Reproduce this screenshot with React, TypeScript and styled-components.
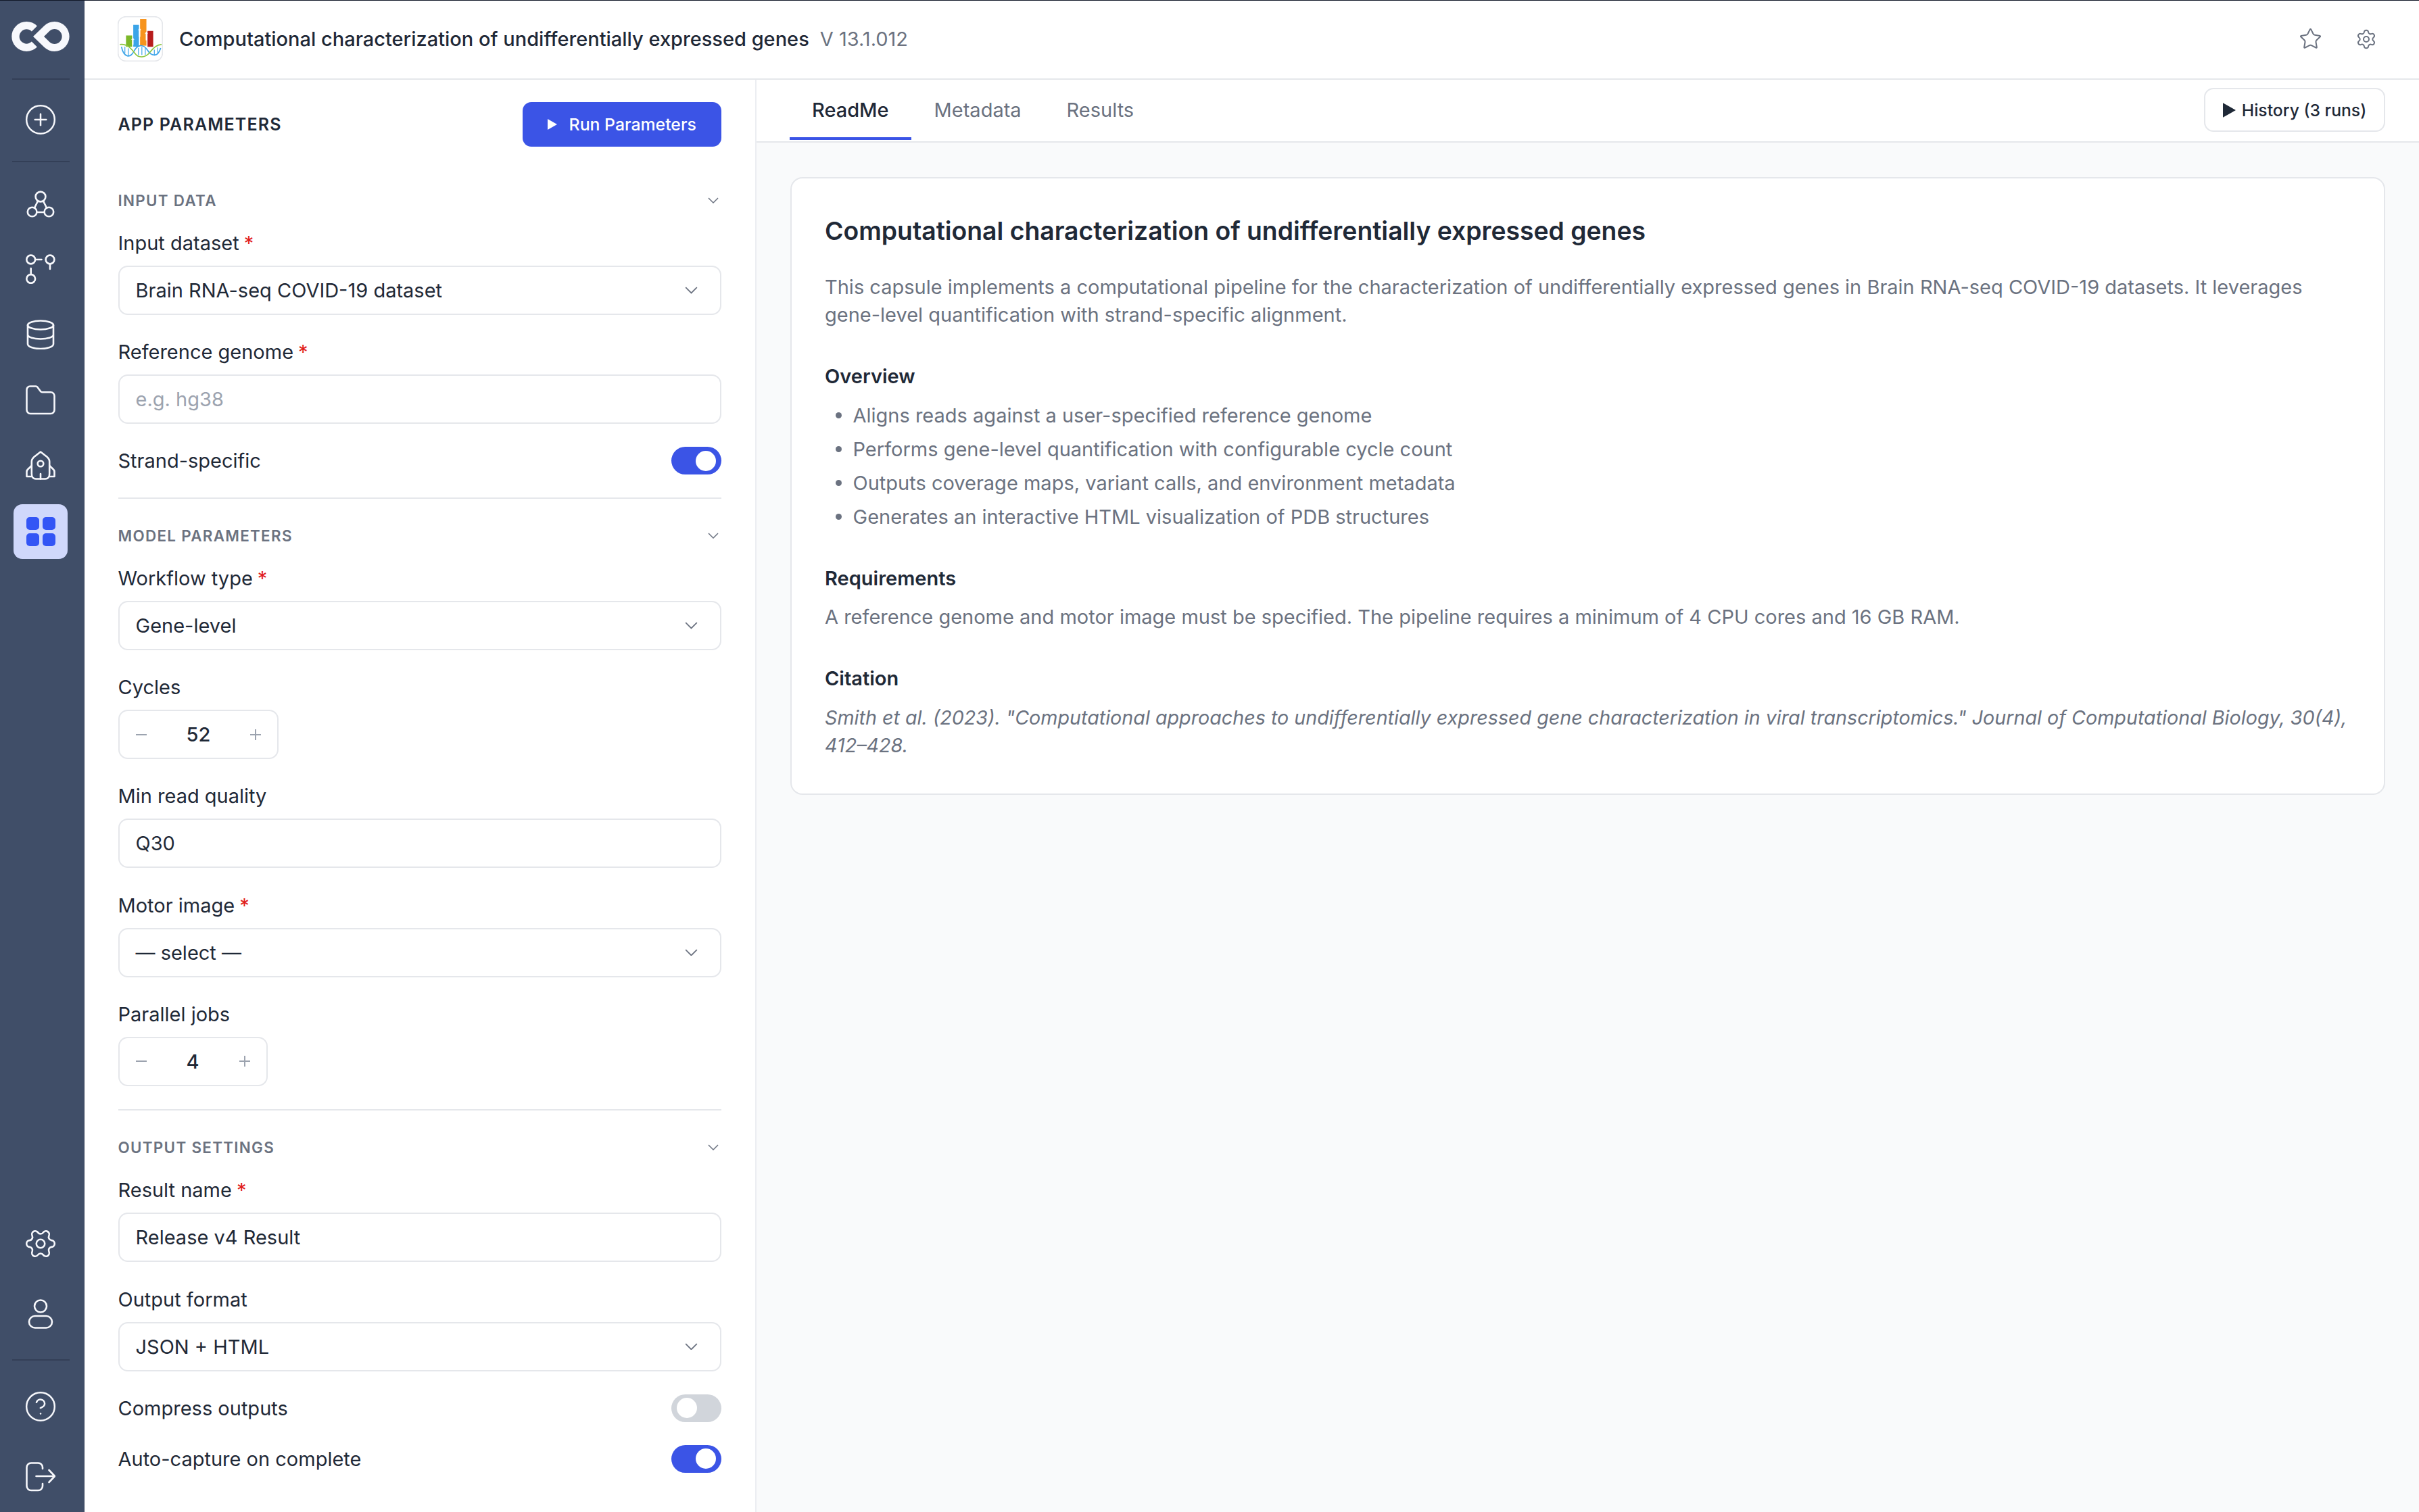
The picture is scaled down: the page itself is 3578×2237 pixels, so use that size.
import React from "react";
import styled, { createGlobalStyle } from "styled-components";
import { CirclePlus, CircleHelp, Settings, Star } from "lucide-react";

const GlobalStyle = createGlobalStyle`
  html, body { margin: 0; padding: 0; background: #fff; }
  body { font-family: Inter, "Liberation Sans", sans-serif; color: #1f2937; overflow: hidden; }
  * { box-sizing: border-box; }
`;

const Page = styled.div`
  display: flex;
  width: 3578px;
  height: 2237px;
  border-top: 1px solid #111827;
  overflow: hidden;
`;

const Sidebar = styled.nav`
  flex: 0 0 125px;
  display: flex;
  flex-direction: column;
  align-items: center;
  background: #404e68;
  border-right: 1px solid #36435b;
  padding: 23px 4px 12px 0;
`;

const LogoMark = styled.svg`
  width: 100px;
  height: 60px;
  flex: none;
`;

const NavRule = styled.div<{ $top: number; $bottom: number }>`
  width: 85px;
  height: 2px;
  flex: none;
  background: #333f57;
  margin: ${(p) => p.$top}px 0 ${(p) => p.$bottom}px;
`;

const NavItem = styled.div<{ $active?: boolean }>`
  width: 80px;
  height: 81px;
  flex: none;
  display: flex;
  align-items: center;
  justify-content: center;
  border-radius: 13px;
  color: #f7f8fc;
  background: ${(p) => (p.$active ? "#d0d8fb" : "transparent")};
`;

const NavGroup = styled.div`
  display: flex;
  flex-direction: column;
  gap: 16px;
`;

const NavFooter = styled.div`
  margin-top: auto;
  display: flex;
  flex-direction: column;
  align-items: center;
  gap: 23px;
`;

const NavFooterGroup = styled.div`
  display: flex;
  flex-direction: column;
  gap: 23px;
`;

const NavSvg = styled.svg.attrs({ viewBox: "0 0 44 44", fill: "none", stroke: "currentColor" })`
  width: 44px;
  height: 44px;
  stroke-width: 2.6;
  stroke-linecap: round;
  stroke-linejoin: round;
`;

const GridMark = styled.div`
  display: grid;
  grid-template-columns: 19px 19px;
  grid-auto-rows: 19px;
  gap: 5px;
`;

const GridCell = styled.span`
  background: #3355f5;
  border-radius: 5px;
`;

const Rotated = styled.span`
  display: flex;
  transform: rotate(90deg);
`;

const Main = styled.div`
  flex: 1;
  min-width: 0;
  display: flex;
  flex-direction: column;
`;

const TopBar = styled.header`
  flex: 0 0 117px;
  display: flex;
  align-items: center;
  padding: 0 62px 2px 49px;
  border-bottom: 2px solid #e5e7eb;
  background: #fff;
`;

const AppLogo = styled.svg`
  width: 67px;
  height: 67px;
  flex: none;
  margin-right: 24px;
`;

const AppTitle = styled.h1`
  margin: 0;
  font-size: 29px;
  line-height: 36px;
  font-weight: 500;
  color: #1f2937;
`;

const Version = styled.span`
  margin-left: 16px;
  font-size: 29px;
  line-height: 36px;
  color: #6b7280;
`;

const TopActions = styled.div`
  margin-left: auto;
  display: flex;
  align-items: center;
  gap: 49px;
  color: #6b7280;
`;

const Body = styled.div`
  flex: 1;
  min-height: 0;
  display: flex;
`;

const Panel = styled.aside`
  flex: 0 0 993.5px;
  padding: 33px 49.5px 0 49.5px;
  background: #fff;
  border-right: 2px solid #eceef2;
`;

const PanelHead = styled.div`
  display: flex;
  align-items: center;
  justify-content: space-between;
  height: 66px;
`;

const PanelTitle = styled.h2`
  margin: 0;
  font-size: 25px;
  font-weight: 600;
  letter-spacing: 1.15px;
  color: #1f2937;
`;

const RunButton = styled.button`
  width: 294.5px;
  height: 66px;
  display: flex;
  align-items: center;
  justify-content: center;
  gap: 18px;
  border: 0;
  border-radius: 13px;
  background: #3b54e6;
  color: #fff;
  font: 500 24.8px Inter, sans-serif;
`;

const Triangle = styled.svg.attrs({ viewBox: "0 0 14 16" })<{ $w: number; $h: number }>`
  width: ${(p) => p.$w}px;
  height: ${(p) => p.$h}px;
  flex: none;
  fill: currentColor;
`;

const SectionHead = styled.div<{ $top: number }>`
  display: flex;
  align-items: center;
  justify-content: space-between;
  height: 28px;
  margin-top: ${(p) => p.$top}px;
  padding-right: 4px;
  color: #6b7280;
`;

const SectionTitle = styled.h3`
  margin: 0;
  font-size: 22.4px;
  font-weight: 600;
  letter-spacing: 1.3px;
  color: #6b7280;
`;

const Fields = styled.div`
  margin-top: 33.5px;
`;

const Field = styled.div`
  margin-top: 39.25px;
  &:first-child { margin-top: 0; }
`;

const Label = styled.label`
  display: block;
  height: 32px;
  margin-bottom: 17px;
  font-size: 29px;
  line-height: 32px;
  color: #1f2937;
`;

const Required = styled.span`
  margin-left: 7px;
  color: #e11d1d;
`;

const TextInput = styled.input`
  display: block;
  width: 100%;
  height: 73px;
  padding: 0 24px;
  border: 2px solid #e5e7eb;
  border-radius: 14px;
  background: #fff;
  font: 400 29px Inter, sans-serif;
  color: #1f2937;
  outline: none;
  &::placeholder { color: #9ca3af; opacity: 1; }
`;

const SelectBox = styled.div`
  display: flex;
  align-items: center;
  justify-content: space-between;
  height: 73px;
  padding: 0 33px 0 24px;
  border: 2px solid #e5e7eb;
  border-radius: 14px;
  background: #fff;
  font-size: 29px;
  color: #1f2937;
`;

const Chevron = styled.svg.attrs({ viewBox: "0 0 16 9", fill: "none", stroke: "currentColor" })<{ $w: number }>`
  width: ${(p) => p.$w}px;
  height: ${(p) => (p.$w * 9) / 16}px;
  flex: none;
  stroke-width: 1.5;
  color: #6b7280;
`;

const Stepper = styled.div`
  display: inline-flex;
  align-items: center;
  height: 73px;
  border: 2px solid #e5e7eb;
  border-radius: 14px;
  background: #fff;
`;

const StepButton = styled.span`
  width: 64px;
  display: flex;
  align-items: center;
  justify-content: center;
  color: #9ca3af;
`;

const StepGlyph = styled.svg.attrs({ viewBox: "0 0 18 18", fill: "none", stroke: "currentColor" })`
  width: 18px;
  height: 18px;
  stroke-width: 2;
`;

const StepValue = styled.span`
  padding: 0 35px;
  font-size: 29px;
  font-weight: 500;
  color: #1f2937;
`;

const ToggleRow = styled.div`
  display: flex;
  align-items: center;
  justify-content: space-between;
  height: 41px;
  margin-top: 34px;
  font-size: 29px;
  color: #1f2937;
`;

const Toggle = styled.span<{ $on?: boolean }>`
  width: 74px;
  height: 41px;
  display: flex;
  align-items: center;
  justify-content: ${(p) => (p.$on ? "flex-end" : "flex-start")};
  padding: 0 8px;
  border-radius: 21px;
  background: ${(p) => (p.$on ? "#3b54e6" : "#d1d5db")};
`;

const Knob = styled.span`
  width: 30px;
  height: 30px;
  border-radius: 50%;
  background: #fff;
`;

const Rule = styled.hr`
  height: 2px;
  margin: 34px 0 0;
  border: 0;
  background: #e5e7eb;
`;

const Content = styled.section`
  flex: 1;
  min-width: 0;
  display: flex;
  flex-direction: column;
  background: #f9fafb;
`;

const TabBar = styled.div`
  flex: 0 0 93px;
  display: flex;
  align-items: center;
  justify-content: space-between;
  padding: 0 50px 2px 49px;
  border-bottom: 2px solid #e5e7eb;
  background: #fff;
`;

const Tabs = styled.div`
  display: flex;
  align-self: stretch;
`;

const Tab = styled.div<{ $active?: boolean }>`
  display: flex;
  align-items: center;
  padding: 4px 33.5px 0;
  font-size: 29px;
  font-weight: ${(p) => (p.$active ? 500 : 400)};
  color: ${(p) => (p.$active ? "#1f2937" : "#6b7280")};
  border-bottom: 4px solid ${(p) => (p.$active ? "#3b54e6" : "transparent")};
`;

const HistoryButton = styled.button`
  width: 268px;
  height: 65px;
  display: flex;
  align-items: center;
  justify-content: center;
  gap: 9px;
  border: 2px solid #e5e7eb;
  border-radius: 14px;
  background: #fff;
  color: #1f2937;
  font: 500 24.7px Inter, sans-serif;
`;

const Card = styled.article`
  margin: 51px 50px 0 50px;
  padding: 56px 49.5px 50.5px;
  border: 2px solid #e5e7eb;
  border-radius: 18px;
  background: #fff;
`;

const CardTitle = styled.h2`
  margin: 0;
  font-size: 37.3px;
  line-height: 44px;
  font-weight: 600;
  color: #1f2937;
`;

const Para = styled.p<{ $top: number; $italic?: boolean }>`
  margin: ${(p) => p.$top}px 0 0;
  font-size: ${(p) => (p.$italic ? 28.7 : 29)}px;
  line-height: 41px;
  color: #6b7280;
  font-style: ${(p) => (p.$italic ? "italic" : "normal")};
`;

const SubTitle = styled.h3<{ $top: number }>`
  margin: ${(p) => p.$top}px 0 0;
  font-size: 29px;
  line-height: 36px;
  font-weight: 600;
  color: #1f2937;
`;

const Bullets = styled.ul`
  margin: 15px 0 0;
  padding: 0 0 0 15.5px;
  list-style: none;
`;

const Bullet = styled.li`
  display: flex;
  align-items: center;
  gap: 17px;
  height: 49.8px;
  font-size: 29px;
  color: #6b7280;
  &::before {
    content: "";
    width: 9px;
    height: 9px;
    flex: none;
    border-radius: 50%;
    background: #6b7280;
  }
`;

const CoLogo = () => (
  <LogoMark viewBox="0 0 300 180">
    <path d="M122.6 55.4A49 49 0 1 0 122.6 124.6" fill="none" stroke="#f7f8fc" strokeWidth="34" />
    <path
      fill="#f7f8fc"
      fillRule="evenodd"
      d="M117 90L166 42.5A66 66 0 1 1 166 137.5ZM165 90L188.8 66.5A33 33 0 1 1 188.8 113.5Z"
    />
  </LogoMark>
);

const GenesLogo = () => (
  <AppLogo viewBox="28 30 200 200">
    <rect x="30" y="32" width="196" height="196" rx="34" fill="#fff" stroke="#e5e7eb" strokeWidth="5" />
    <rect x="65" y="115" width="27" height="50" fill="#7cb829" />
    <rect x="97" y="68" width="25" height="97" fill="#3ba4e8" />
    <rect x="127" y="42" width="28" height="118" fill="#f7941d" />
    <rect x="160" y="95" width="25" height="70" fill="#b71c1c" />
    <path d="M95 125l7 9h-4v22h-6v-22h-4zM125 82l7 9h-4v30h-6V91h-4zM155 98l7 9h-4v30h-6v-30h-4z" fill="#fff" />
    <g stroke="#3ba4e8" strokeWidth="3.5" fill="none">
      <path d="M60 165v30M75 172v32M120 170v32M135 165v36M150 170v30M190 178v26M205 168v24" />
      <path strokeWidth="5" d="M45 165C55 215 85 215 100 185C115 155 140 150 160 180C175 205 205 215 218 170" />
    </g>
    <path
      d="M38 155C70 150 90 175 105 195C120 215 150 215 170 190C185 170 200 155 222 155"
      stroke="#8cc63f"
      strokeWidth="5"
      fill="none"
    />
  </AppLogo>
);

const Play = ({ w, h }: { w: number; h: number }) => (
  <Triangle $w={w} $h={h}>
    <path d="M0 0L14 8L0 16Z" />
  </Triangle>
);

const Caret = ({ w }: { w: number }) => (
  <Chevron $w={w}>
    <path d="M1 1L8 8L15 1" />
  </Chevron>
);

const SelectField = ({ label, value, required }: { label: string; value: string; required?: boolean }) => (
  <Field>
    <Label>
      {label}
      {required && <Required>*</Required>}
    </Label>
    <SelectBox>
      {value}
      <Caret w={19} />
    </SelectBox>
  </Field>
);

const InputField = ({
  label,
  value,
  placeholder,
  required,
}: {
  label: string;
  value?: string;
  placeholder?: string;
  required?: boolean;
}) => (
  <Field>
    <Label>
      {label}
      {required && <Required>*</Required>}
    </Label>
    <TextInput defaultValue={value} placeholder={placeholder} />
  </Field>
);

const StepperField = ({ label, value }: { label: string; value: string }) => (
  <Field>
    <Label>{label}</Label>
    <Stepper>
      <StepButton>
        <StepGlyph>
          <path d="M1 9H17" />
        </StepGlyph>
      </StepButton>
      <StepValue>{value}</StepValue>
      <StepButton>
        <StepGlyph>
          <path d="M1 9H17M9 1V17" />
        </StepGlyph>
      </StepButton>
    </Stepper>
  </Field>
);

const SwitchRow = ({ label, on }: { label: string; on?: boolean }) => (
  <ToggleRow>
    {label}
    <Toggle $on={on}>
      <Knob />
    </Toggle>
  </ToggleRow>
);

export default function App() {
  return (
    <>
      <GlobalStyle />
      <Page>
        <Sidebar>
          <CoLogo />
          <NavRule $top={31.5} $bottom={19} />
          <NavItem>
            <CirclePlus size={50} strokeWidth={1.2} />
          </NavItem>
          <NavRule $top={20} $bottom={21} />
          <NavGroup>
            <NavItem>
              <NavSvg>
                <circle cx="22" cy="12" r="7.4" />
                <circle cx="9.6" cy="34.5" r="6.8" />
                <circle cx="34.4" cy="34.5" r="6.8" />
                <path d="M18 18.5L13 28.5M26 18.5L31 28.5M16.5 35H27.5" />
              </NavSvg>
            </NavItem>
            <NavItem>
              <NavSvg>
                <circle cx="7.7" cy="8" r="6.4" />
                <circle cx="36" cy="8" r="6.4" />
                <circle cx="7.7" cy="36.5" r="6.4" />
                <path d="M14.5 8H23.5M36 14.5V22M7.7 30V21" />
              </NavSvg>
            </NavItem>
            <NavItem>
              <NavSvg>
                <ellipse cx="22" cy="8" rx="19" ry="6.5" />
                <path d="M3 8V36C3 40 12 43 22 43S41 40 41 36V8M3 22C3 26 12 28.5 22 28.5S41 26 41 22" />
              </NavSvg>
            </NavItem>
            <NavItem>
              <NavSvg>
                <path d="M1.5 6.5a5 5 0 0 1 5-5H15a3 3 0 0 1 2.4 1.2L22 9a3 3 0 0 0 2.4 1.2H37a5.5 5.5 0 0 1 5.5 5.5V36.5a5.5 5.5 0 0 1-5.5 5.5H7a5.5 5.5 0 0 1-5.5-5.5Z" />
              </NavSvg>
            </NavItem>
            <NavItem>
              <NavSvg>
                <path d="M22 1.5L13 8.5C10 11 8.8 13 8.8 16V34C8.8 39 11.5 41.5 15 41.5H29C32.5 41.5 35.2 39 35.2 34V16C35.2 13 34 11 31 8.5Z" />
                <circle cx="22" cy="19" r="4.3" />
                <path d="M22 34V41.5M8.8 22L3 27.5C2 28.5 1.5 29.5 1.5 31V38H9M35.2 22L41 27.5C42 28.5 42.5 29.5 42.5 31V38H35" />
              </NavSvg>
            </NavItem>
            <NavItem $active>
              <GridMark>
                <GridCell />
                <GridCell />
                <GridCell />
                <GridCell />
              </GridMark>
            </NavItem>
          </NavGroup>
          <NavFooter>
            <NavFooterGroup>
              <NavItem>
                <Rotated>
                  <Settings size={50} strokeWidth={1.25} />
                </Rotated>
              </NavItem>
              <NavItem>
                <NavSvg>
                  <circle cx="22" cy="10.5" r="9" />
                  <rect x="5" y="25" width="34" height="17.5" rx="8.75" />
                </NavSvg>
              </NavItem>
            </NavFooterGroup>
            <NavRule $top={4} $bottom={4} />
            <NavFooterGroup>
              <NavItem>
                <CircleHelp size={50} strokeWidth={1.2} />
              </NavItem>
              <NavItem>
                <NavSvg>
                  <path d="M25 10V8a6.5 6.5 0 0 0-6.5-6.5H8A6.5 6.5 0 0 0 1.5 8V35.5A6.5 6.5 0 0 0 8 42H18.5A6.5 6.5 0 0 0 25 35.5V32M15.5 21H43M34.5 12L43 21L34.5 30" />
                </NavSvg>
              </NavItem>
            </NavFooterGroup>
          </NavFooter>
        </Sidebar>
        <Main>
          <TopBar>
            <GenesLogo />
            <AppTitle>Computational characterization of undifferentially expressed genes</AppTitle>
            <Version>V 13.1.012</Version>
            <TopActions>
              <Star size={35} strokeWidth={1.4} />
              <Settings size={32} strokeWidth={1.5} />
            </TopActions>
          </TopBar>
          <Body>
            <Panel>
              <PanelHead>
                <PanelTitle>APP PARAMETERS</PanelTitle>
                <RunButton>
                  <Play w={14} h={16} />
                  Run Parameters
                </RunButton>
              </PanelHead>
              <SectionHead $top={65.5}>
                <SectionTitle>INPUT DATA</SectionTitle>
                <Caret w={16} />
              </SectionHead>
              <Fields>
                <SelectField label="Input dataset" value="Brain RNA-seq COVID-19 dataset" required />
                <InputField label="Reference genome" placeholder="e.g. hg38" required />
                <SwitchRow label="Strand-specific" on />
              </Fields>
              <Rule />
              <SectionHead $top={40}>
                <SectionTitle>MODEL PARAMETERS</SectionTitle>
                <Caret w={16} />
              </SectionHead>
              <Fields>
                <SelectField label="Workflow type" value="Gene-level" required />
                <StepperField label="Cycles" value="52" />
                <InputField label="Min read quality" value="Q30" />
                <SelectField label="Motor image" value="— select —" required />
                <StepperField label="Parallel jobs" value="4" />
              </Fields>
              <Rule />
              <SectionHead $top={41}>
                <SectionTitle>OUTPUT SETTINGS</SectionTitle>
                <Caret w={16} />
              </SectionHead>
              <Fields>
                <InputField label="Result name" value="Release v4 Result" required />
                <SelectField label="Output format" value="JSON + HTML" />
                <SwitchRow label="Compress outputs" />
                <SwitchRow label="Auto-capture on complete" on />
              </Fields>
            </Panel>
            <Content>
              <TabBar>
                <Tabs>
                  <Tab $active>ReadMe</Tab>
                  <Tab>Metadata</Tab>
                  <Tab>Results</Tab>
                </Tabs>
                <HistoryButton>
                  <Play w={19} h={22} />
                  History (3 runs)
                </HistoryButton>
              </TabBar>
              <Card>
                <CardTitle>Computational characterization of undifferentially expressed genes</CardTitle>
                <Para $top={40}>
                  This capsule implements a computational pipeline for the characterization of undifferentially
                  expressed genes in Brain RNA-seq COVID-19 datasets. It leverages gene-level quantification with
                  strand-specific alignment.
                </Para>
                <SubTitle $top={53}>Overview</SubTitle>
                <Bullets>
                  <Bullet>Aligns reads against a user-specified reference genome</Bullet>
                  <Bullet>Performs gene-level quantification with configurable cycle count</Bullet>
                  <Bullet>Outputs coverage maps, variant calls, and environment metadata</Bullet>
                  <Bullet>Generates an interactive HTML visualization of PDB structures</Bullet>
                </Bullets>
                <SubTitle $top={48.5}>Requirements</SubTitle>
                <Para $top={18.5}>
                  A reference genome and motor image must be specified. The pipeline requires a minimum of 4 CPU cores
                  and 16 GB RAM.
                </Para>
                <SubTitle $top={53}>Citation</SubTitle>
                <Para $top={19} $italic>
                  Smith et al. (2023). "Computational approaches to undifferentially expressed gene characterization in
                  viral transcriptomics." Journal of Computational Biology, 30(4), 412–428.
                </Para>
              </Card>
            </Content>
          </Body>
        </Main>
      </Page>
    </>
  );
}
